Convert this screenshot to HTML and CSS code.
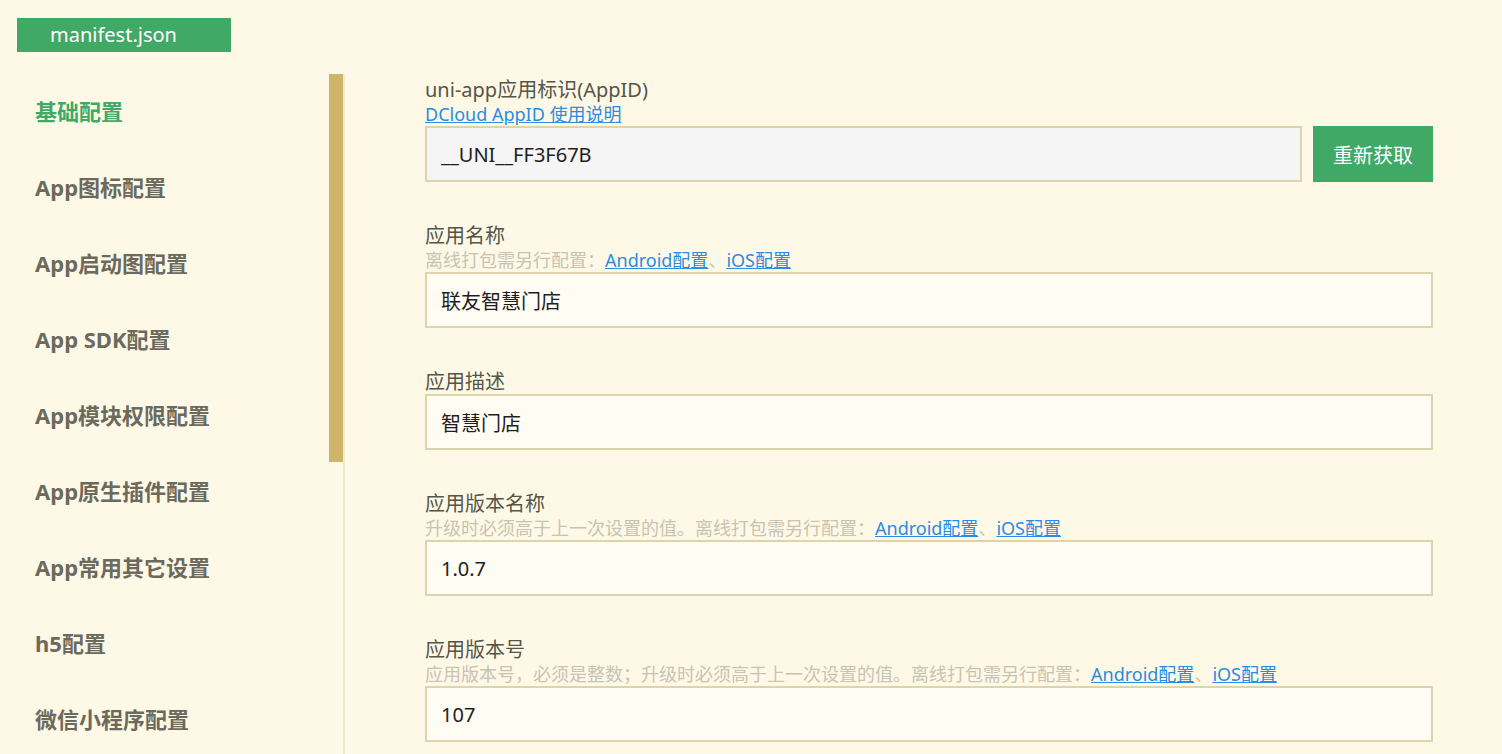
FILE: index.html
```html
<!DOCTYPE html>
<html lang="zh-CN">
<head>
<meta charset="utf-8">
<title>manifest.json</title>
<link rel="stylesheet" href="styles.css">
</head>
<body>
<div class="page">
  <div class="tabs">
    <div class="tab">manifest.json</div>
  </div>
  <div class="body">
    <nav class="sidebar">
      <ul class="menu">
        <li class="menu-item active">基础配置</li>
        <li class="menu-item">App图标配置</li>
        <li class="menu-item">App启动图配置</li>
        <li class="menu-item">App SDK配置</li>
        <li class="menu-item">App模块权限配置</li>
        <li class="menu-item">App原生插件配置</li>
        <li class="menu-item">App常用其它设置</li>
        <li class="menu-item">h5配置</li>
        <li class="menu-item">微信小程序配置</li>
      </ul>
      <div class="scroll-thumb"></div>
    </nav>
    <main class="content">
      <section class="field">
        <div class="label">uni-app应用标识(AppID)</div>
        <div class="sub"><a class="link" href="#">DCloud AppID 使用说明</a></div>
        <div class="row">
          <input class="input readonly" type="text" value="__UNI__FF3F67B" readonly>
          <button class="btn">重新获取</button>
        </div>
      </section>
      <section class="field">
        <div class="label">应用名称</div>
        <div class="sub">离线打包需另行配置：<a class="link" href="#">Android配置</a>、<a class="link" href="#">iOS配置</a></div>
        <input class="input" type="text" value="联友智慧门店">
      </section>
      <section class="field">
        <div class="label">应用描述</div>
        <input class="input" type="text" value="智慧门店">
      </section>
      <section class="field">
        <div class="label">应用版本名称</div>
        <div class="sub">升级时必须高于上一次设置的值。离线打包需另行配置：<a class="link" href="#">Android配置</a>、<a class="link" href="#">iOS配置</a></div>
        <input class="input" type="text" value="1.0.7">
      </section>
      <section class="field">
        <div class="label">应用版本号</div>
        <div class="sub">应用版本号，必须是整数；升级时必须高于上一次设置的值。离线打包需另行配置：<a class="link" href="#">Android配置</a>、<a class="link" href="#">iOS配置</a></div>
        <input class="input" type="text" value="107">
      </section>
    </main>
  </div>
</div>
</body>
</html>
```
FILE: styles.css
```css
* { box-sizing: border-box; }
html, body {
  margin: 0;
  padding: 0;
  height: 100%;
  overflow: hidden;
}
body {
  background: #fef9e7;
  font-family: "Noto Sans", "Noto Sans CJK SC", sans-serif;
  color: #555548;
}
.page {
  display: flex;
  flex-direction: column;
  height: 100%;
}
.tabs {
  padding: 18px 0 0 17px;
  height: 74px;
  flex: none;
}
.tab {
  width: 214px;
  height: 34px;
  background: #40a966;
  color: #fff;
  font-size: 20px;
  line-height: 34px;
  padding-left: 33px;
}
.body {
  flex: 1;
  display: flex;
  min-height: 0;
}
.sidebar {
  position: relative;
  width: 345px;
  flex: none;
  border-right: 2px solid #f3eacd;
}
.menu {
  list-style: none;
  margin: 0;
  padding: 0;
}
.menu-item {
  height: 76px;
  line-height: 74px;
  padding-left: 35px;
  font-size: 22px;
  font-weight: 700;
  color: #6b6a5d;
}
.menu-item.active {
  color: #40a966;
}
.scroll-thumb {
  position: absolute;
  top: 0;
  right: 0;
  width: 14px;
  height: 388px;
  background: #cfb46b;
}
.content {
  flex: 1;
  padding: 4px 69px 0 80px;
}
.field {
  margin-bottom: 42px;
}
.label {
  font-size: 20px;
  line-height: 24px;
  color: #555548;
}
.sub {
  font-size: 18px;
  line-height: 24px;
  color: #c9c3b2;
  white-space: nowrap;
}
.link {
  color: #2b8ce0;
  text-decoration: underline;
}
.row {
  display: flex;
  gap: 11px;
}
.input {
  display: block;
  width: 100%;
  height: 56px;
  margin: 0;
  border: 2px solid #ddd3ac;
  background: #fffcf3;
  padding: 0 14px;
  font-family: "Noto Sans", "Noto Sans CJK SC", sans-serif;
  font-size: 20px;
  color: #1e1e1e;
  outline: none;
}
.input.readonly {
  flex: 1;
  background: #f5f5f5;
}
.btn {
  flex: none;
  width: 120px;
  height: 56px;
  border: none;
  background: #40a966;
  color: #fff;
  font-family: "Noto Sans", "Noto Sans CJK SC", sans-serif;
  font-size: 20px;
  padding: 0;
}
```
